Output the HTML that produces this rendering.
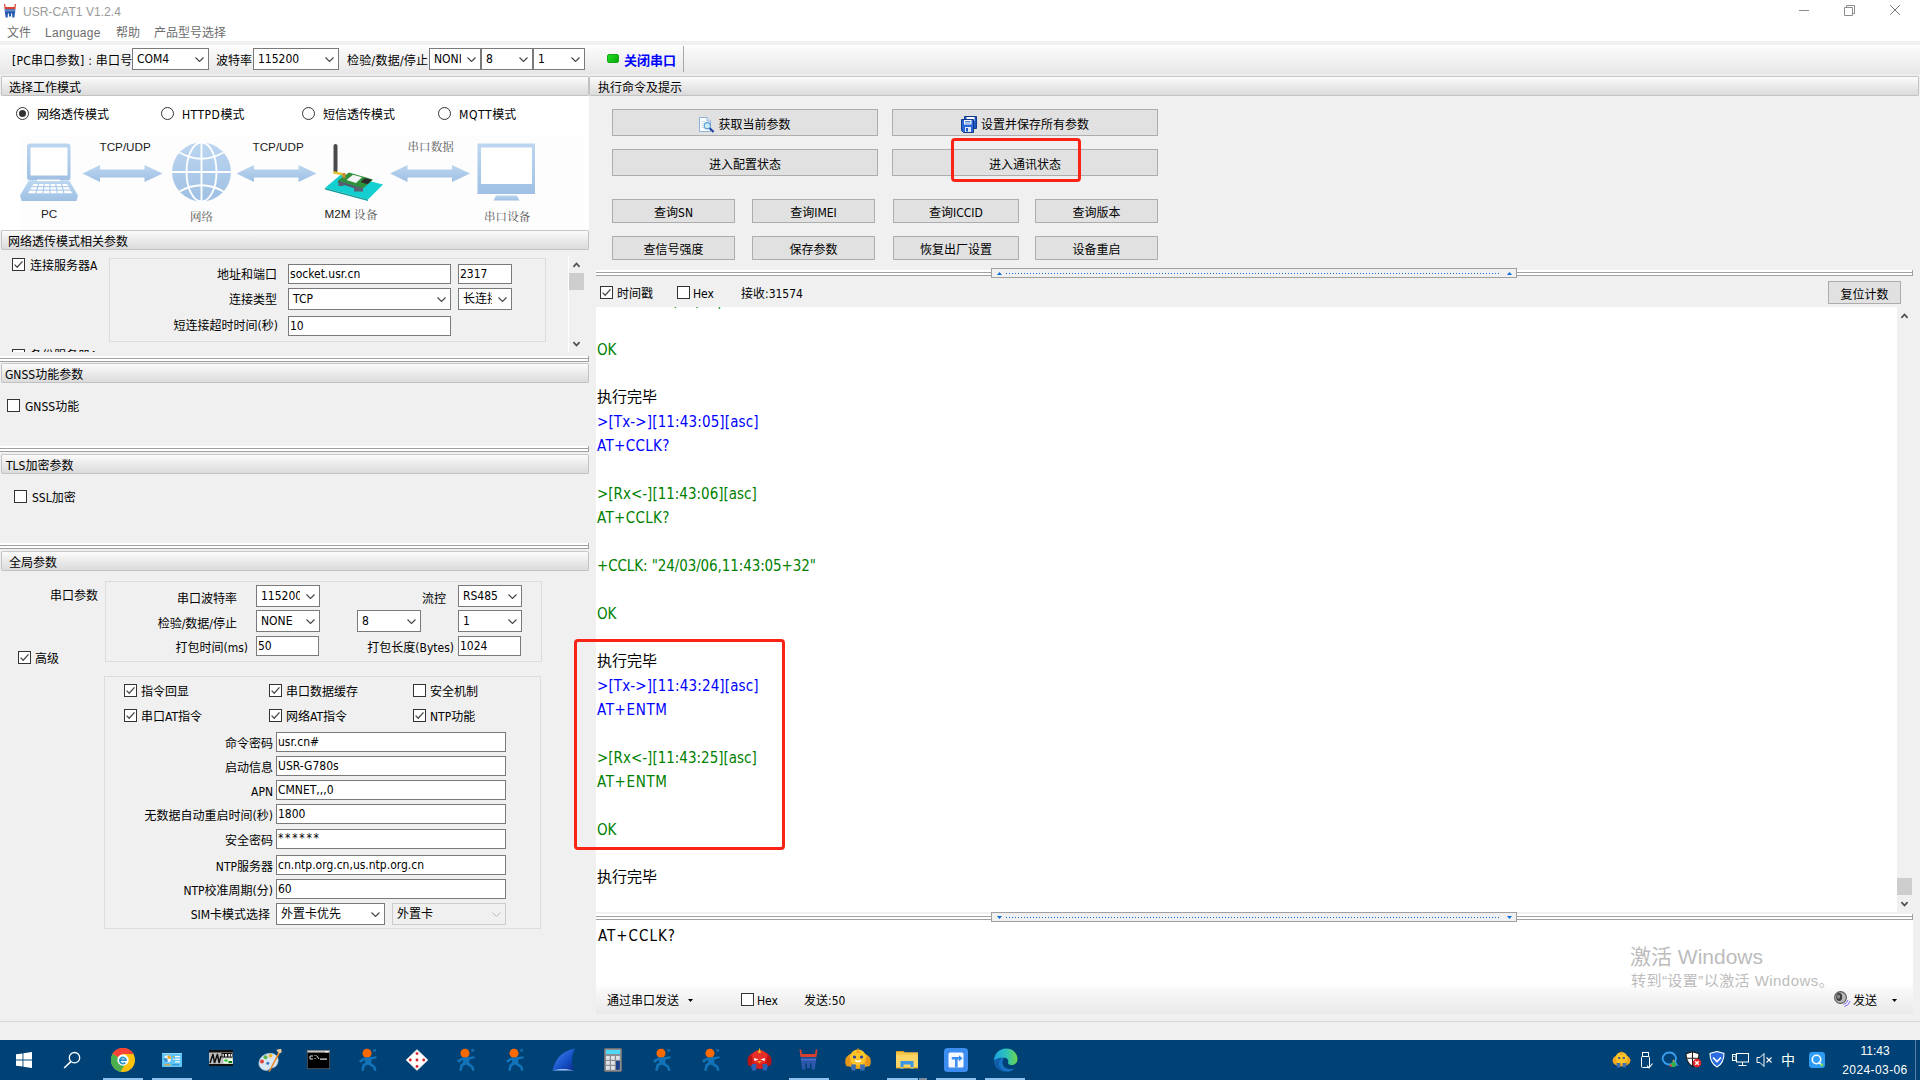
<!DOCTYPE html>
<html lang="zh-CN">
<head>
<meta charset="utf-8">
<title>USR-CAT1 V1.2.4</title>
<style>
*{box-sizing:border-box;margin:0;padding:0}
html,body{width:1920px;height:1080px;overflow:hidden;background:#f0f0f0}
body{position:relative;font-family:"DejaVu Sans Condensed","Liberation Sans","Noto Sans CJK SC",sans-serif;font-size:12px;color:#000;line-height:14px}
.a{position:absolute}
.t{position:absolute;white-space:nowrap;font-size:12px;line-height:16px;height:16px}
.r{text-align:right}
.hdr{position:absolute;height:20px;border:1px solid #c2c2c2;border-top-color:#c8c8c8;border-radius:2px;background:linear-gradient(#fbfbfb,#ececec 45%,#dbdbdb);font-size:12px;line-height:20px;white-space:nowrap;padding-top:1px}
.combo{position:absolute;background:#fff;border:1px solid #7a7a7a;font-size:12px;line-height:14px;white-space:nowrap;overflow:hidden}
.combo span{position:absolute;left:4px;top:3px}
.combo:after{content:"";position:absolute;right:0;top:0;width:19px;height:100%;background:inherit}
.combo svg{position:absolute;right:4px;top:8px;width:9px;height:5px;z-index:2}
.edit{position:absolute;background:#fff;border:1px solid #7a7a7a;font-size:12px;line-height:14px;white-space:nowrap;overflow:hidden;padding:2px 0 0 1px}
.btn{position:absolute;background:#e1e1e1;border:1px solid #adadad;font-size:12px;line-height:14px;white-space:nowrap;text-align:center;padding-top:1px}
.cb{position:absolute;width:13px;height:13px;background:#fff;border:1px solid #333}
.cb svg{position:absolute;left:0;top:0;width:11px;height:11px}
.rb{position:absolute;width:13px;height:13px;background:#fff;border:1px solid #333;border-radius:50%}
.rb.on:after{content:"";position:absolute;left:2px;top:2px;width:7px;height:7px;border-radius:50%;background:#333}
.gb{position:absolute;border:1px solid #dcdcdc}
.split{position:absolute;height:6px;border-right:1px solid #a0a0a0;background:linear-gradient(#fff 0,#fff 2px,#a0a0a0 2px,#a0a0a0 3px,#fff 3px,#fff 5px,#a0a0a0 5px,#a0a0a0 6px)}
.log{position:absolute;white-space:nowrap;font-size:15px;line-height:24px;height:24px;left:597px}
#titlebar,#menubar,#taskbar,.wm{font-family:"Liberation Sans","Noto Sans CJK SC",sans-serif}
.bl{color:#0000ff}.gr{color:#008000}
</style>
</head>
<body>
<!-- TITLE BAR -->
<div class="a" id="titlebar" style="left:0;top:0;width:1920px;height:22px;background:#fff">
<svg class="a" style="left:4px;top:4px" width="12" height="14" viewBox="0 0 13 14" preserveAspectRatio="none"><path d="M0 0 L1.2 0 L1.8 3 L11.2 3 L11.8 0 L13 0 L12.3 5.2 L0.7 5.2 Z" fill="#d9412e"/><path d="M0.6 5.2 L12.4 5.2 L12 8.5 L11.2 13.6 L9 13.6 L8.8 9.5 L7.6 9.5 L7.6 12.5 L5.4 12.5 L5.4 9.5 L4.2 9.5 L4 13.6 L1.8 13.6 L1 8.5 Z" fill="#2559b0"/><rect x="1" y="6.3" width="11" height="1" fill="#7fa0d8"/></svg>
<div class="t" style="left:23px;top:4px;color:#999;font-size:12px;letter-spacing:.05px">USR-CAT1 V1.2.4</div>
<svg class="a" style="left:1799px;top:5px" width="110" height="12" viewBox="0 0 110 12"><path d="M0 5.5 H10" stroke="#8c8c8c" stroke-width="1" fill="none"/><path d="M45.5 2.5 H53.5 V10.5 H45.5 Z M47.5 2.5 V0.5 H55.5 V8.5 H53.5" stroke="#8c8c8c" stroke-width="1" fill="none"/><path d="M91.2 0.2 L100.8 9.8 M100.8 0.2 L91.2 9.8" stroke="#777" stroke-width="1" fill="none"/></svg>
</div>
<!-- MENU BAR -->
<div class="a" id="menubar" style="left:0;top:22px;width:1920px;height:19px;background:#fff;color:#6d6d6d">
<div class="t" style="left:7px;top:3px">文件</div>
<div class="t" style="left:45px;top:3px;letter-spacing:.3px">Language</div>
<div class="t" style="left:116px;top:3px">帮助</div>
<div class="t" style="left:154px;top:3px">产品型号选择</div>
</div>
<!-- TOOLBAR -->
<div class="a" id="toolbar" style="left:0;top:41px;width:1920px;height:36px;background:linear-gradient(#f0f0f0 0,#f0f0f0 4px,#fdfdfd 4px,#f7f7f7 11px,#eeeeee 24px,#e6e6e6 33px,#ededed 33px,#ededed 36px)">
<div class="t" style="left:12px;top:12px;letter-spacing:.25px">[PC串口参数] : 串口号</div>
<div class="combo" style="left:132px;top:7px;width:77px;height:22px"><span>COM4</span><svg viewBox="0 0 9 5"><path d="M0.5 0.5 L4.5 4.5 L8.5 0.5" fill="none" stroke="#444" stroke-width="1.1"/></svg></div>
<div class="t" style="left:216px;top:12px">波特率</div>
<div class="combo" style="left:253px;top:7px;width:86px;height:22px"><span>115200</span><svg viewBox="0 0 9 5"><path d="M0.5 0.5 L4.5 4.5 L8.5 0.5" fill="none" stroke="#444" stroke-width="1.1"/></svg></div>
<div class="t" style="left:347px;top:12px;letter-spacing:.25px">检验/数据/停止</div>
<div class="combo" style="left:429px;top:7px;width:52px;height:22px"><span>NONI</span><svg viewBox="0 0 9 5"><path d="M0.5 0.5 L4.5 4.5 L8.5 0.5" fill="none" stroke="#444" stroke-width="1.1"/></svg></div><div class="combo" style="left:481px;top:7px;width:52px;height:22px"><span>8</span><svg viewBox="0 0 9 5"><path d="M0.5 0.5 L4.5 4.5 L8.5 0.5" fill="none" stroke="#444" stroke-width="1.1"/></svg></div><div class="combo" style="left:533px;top:7px;width:52px;height:22px"><span>1</span><svg viewBox="0 0 9 5"><path d="M0.5 0.5 L4.5 4.5 L8.5 0.5" fill="none" stroke="#444" stroke-width="1.1"/></svg></div>
<div class="a" style="left:607px;top:13px;width:12px;height:9px;border-radius:2px;background:linear-gradient(135deg,#1fe01f,#0aa50a);border:1px solid #16a516"></div>
<div class="t" style="left:624px;top:12px;color:#0000ff;font-weight:bold;font-size:13px">关闭串口</div>
<div class="a" style="left:683px;top:5px;width:1px;height:26px;background:#a8a8a8"></div>
</div>
<!-- LEFT PANEL -->
<div class="a" id="left" style="left:0;top:0;width:590px;height:1021px">
<div class="a" style="left:0;top:96px;width:589px;height:134px;background:#fff"></div>
<div class="hdr" style="left:1px;top:76px;width:588px;padding-left:7px">选择工作模式</div>
<div class="rb on" style="left:16px;top:107px"></div>
<div class="t" style="left:37px;top:107px">网络透传模式</div>
<div class="rb" style="left:161px;top:107px"></div>
<div class="t" style="left:182px;top:107px"><span style="letter-spacing:.5px">HTTPD</span>模式</div>
<div class="rb" style="left:302px;top:107px"></div>
<div class="t" style="left:323px;top:107px">短信透传模式</div>
<div class="rb" style="left:438px;top:107px"></div>
<div class="t" style="left:459px;top:107px"><span style="letter-spacing:.6px">MQTT</span>模式</div>
<!--DIAGRAM-->
<svg class="a" style="left:20px;top:136px" width="564" height="94" viewBox="20 136 564 94">
<defs>
<linearGradient id="lb" x1="0" y1="0" x2="0" y2="1"><stop offset="0" stop-color="#bcd6f0"/><stop offset="1" stop-color="#9fc0e4"/></linearGradient>
</defs>
<rect x="20" y="136" width="564" height="94" fill="#fdfdfd"/>
<!-- laptop -->
<rect x="27" y="143.5" width="43.5" height="37" rx="3" fill="url(#lb)"/>
<rect x="30.5" y="147.5" width="37" height="28" fill="#fff"/>
<path d="M28.5 181 L69.5 181 L78 195.5 L76.5 201 L21.5 201 L20 195.5 Z" fill="url(#lb)"/>
<rect x="37" y="179.6" width="23" height="1.6" fill="#fff"/>
<g fill="#fff"><path d="M33.5 184 L67 184 L68.2 186 L32.3 186 Z"/><path d="M31.5 187.2 L68.9 187.2 L70.2 189.6 L30.2 189.6 Z"/><path d="M29.4 190.8 L70.8 190.8 L72 193.2 L28.2 193.2 Z"/></g>
<g stroke="#a9c8e9" stroke-width="1.1"><path d="M38.6 183.5 L36 193.5 M44.3 183.5 L42.8 193.5 M50 183.5 L50 193.5 M55.7 183.5 L57.2 193.5 M61.4 183.5 L64 193.5"/></g>
<!-- arrows -->
<g fill="url(#lb)">
<path d="M82.5 173.5 L100 165 L100 169.5 L144.5 169.5 L144.5 165 L162.5 173.5 L144.5 182 L144.5 177.5 L100 177.5 L100 182 Z"/>
<path d="M236.5 173.5 L254 165 L254 169.5 L298.5 169.5 L298.5 165 L316.5 173.5 L298.5 182 L298.5 177.5 L254 177.5 L254 182 Z"/>
<path d="M390 173.5 L407.5 165 L407.5 169.5 L452 169.5 L452 165 L470 173.5 L452 182 L452 177.5 L407.5 177.5 L407.5 182 Z"/>
</g>
<!-- globe -->
<circle cx="201.5" cy="172" r="29.5" fill="url(#lb)"/>
<g fill="none" stroke="#fdfeff" stroke-width="1.9">
<path d="M172 172 H231 M201.5 142.5 V201.5"/>
<ellipse cx="201.5" cy="172" rx="15" ry="29.5"/>
<path d="M179.5 152.5 Q201.5 165 223.5 152.5 M179.5 191.5 Q201.5 179 223.5 191.5"/>
</g>
<!-- M2M device -->
<path d="M325 188 L341.5 174 L383 184.5 L368 199.5 Z" fill="#14cfcf"/>
<path d="M325 188 L368 199.5 L368 201 L325 189.5 Z" fill="#0e9e9e"/>
<path d="M338 180.5 L349 172.5 L373 179.5 L363 188.5 Z" fill="#2f8f3a"/>
<path d="M338 180.5 L363 188.5 L363 191 L338 183 Z" fill="#555a66"/>
<path d="M346.5 180 L353 174.7 L362 177.3 L356 183 Z" fill="#f4f4f4"/>
<path d="M360.5 182 L365 178 L372 180 L367.5 184.3 Z" fill="#2b2b2b"/>
<rect x="354" y="187.5" width="9" height="4" fill="#5b6070"/>
<rect x="338.5" y="183" width="5" height="3" fill="#5b6070"/>
<rect x="333.5" y="144" width="4" height="29" rx="2" fill="#4a4a4a"/>
<path d="M333 171 L345 173.5 L345 176 L333 173.5 Z" fill="#e2c437"/>
<rect x="342.5" y="173" width="3" height="5" fill="#c98a2c"/>
<!-- monitor -->
<rect x="477.5" y="143.5" width="57.5" height="50.5" fill="url(#lb)"/>
<rect x="481" y="147.5" width="51" height="36.5" fill="#fff"/>
<path d="M496 195.5 L517 195.5 L519.5 200.5 L493.5 200.5 Z" fill="url(#lb)"/>
<!-- labels -->
<g font-family="'Liberation Sans',sans-serif" font-size="11.7" fill="#1a1a1a">
<text x="99.5" y="151">TCP/UDP</text>
<text x="252.5" y="151">TCP/UDP</text>
<text x="41" y="218">PC</text>
<text x="324.5" y="218">M2M</text>
</g>
<g font-family="'Liberation Serif','Noto Serif CJK SC',serif" font-size="11.5" fill="#555">
<text x="190" y="220.5">网络</text>
<text x="407.5" y="151" letter-spacing="0.1">串口数据</text>
<text x="354" y="218.5" letter-spacing="0.6">设备</text>
<text x="484" y="221" letter-spacing="0.1">串口设备</text>
</g>
</svg>
<!--/DIAGRAM-->
<div class="hdr" style="left:1px;top:230px;width:588px;padding-left:6px">网络透传模式相关参数</div>
<div class="a" style="left:0;top:251px;width:589px;height:101px;overflow:hidden">
<div class="cb" style="left:12px;top:7px"><svg viewBox="0 0 11 11"><path d="M1.6 5.6 L4.2 8.3 L9.5 2.4" fill="none" stroke="#4a4a4a" stroke-width="1.35"/></svg></div>
<div class="t" style="left:30px;top:7px">连接服务器A</div>
<div class="gb" style="left:109px;top:7px;width:437px;height:84px"></div>
<div class="t r" style="left:77px;width:200px;top:16px">地址和端口</div>
<div class="edit" style="left:288px;top:13px;width:163px;height:20px">socket.usr.cn</div>
<div class="edit" style="left:458px;top:13px;width:54px;height:20px">2317</div>
<div class="t r" style="left:77px;width:200px;top:41px">连接类型</div>
<div class="combo" style="left:288px;top:37px;width:163px;height:22px"><span>TCP</span><svg viewBox="0 0 9 5"><path d="M0.5 0.5 L4.5 4.5 L8.5 0.5" fill="none" stroke="#444" stroke-width="1.1"/></svg></div>
<div class="combo" style="left:458px;top:37px;width:54px;height:22px"><span>长连接</span><svg viewBox="0 0 9 5"><path d="M0.5 0.5 L4.5 4.5 L8.5 0.5" fill="none" stroke="#444" stroke-width="1.1"/></svg></div>
<div class="t r" style="left:78px;width:200px;top:67px">短连接超时时间(秒)</div>
<div class="edit" style="left:288px;top:65px;width:163px;height:20px">10</div>
<div class="cb" style="left:12px;top:98px"></div>
<div class="t" style="left:30px;top:97px">备份服务器A</div>
<div class="a" style="left:568px;top:5px;width:18px;height:96px;background:#f0f0f0;border-left:1px solid #fff"></div>
<svg class="a" style="left:573px;top:11px" width="7" height="6" viewBox="0 0 7 6"><path d="M0.4 4.8 L3.5 1.5 L6.6 4.8" fill="none" stroke="#505050" stroke-width="1.8"/></svg>
<div class="a" style="left:569px;top:22px;width:15px;height:17px;background:#cdcdcd"></div>
<svg class="a" style="left:573px;top:90px" width="7" height="6" viewBox="0 0 7 6"><path d="M0.4 1.2 L3.5 4.5 L6.6 1.2" fill="none" stroke="#505050" stroke-width="1.8"/></svg>
</div>
<div class="split" style="left:0px;top:356px;width:589px"></div>
<div class="hdr" style="left:1px;top:363px;width:588px;padding-left:3px">GNSS功能参数</div>
<div class="cb" style="left:7px;top:399px"></div>
<div class="t" style="left:25px;top:399px">GNSS功能</div>
<div class="split" style="left:0px;top:446px;width:589px"></div>
<div class="hdr" style="left:1px;top:454px;width:588px;padding-left:4px">TLS加密参数</div>
<div class="cb" style="left:14px;top:490px"></div>
<div class="t" style="left:32px;top:490px">SSL加密</div>
<div class="split" style="left:0px;top:543px;width:589px"></div>
<div class="hdr" style="left:1px;top:551px;width:588px;padding-left:7px">全局参数</div>
<div class="t" style="left:50px;top:588px">串口参数</div>
<div class="gb" style="left:105px;top:581px;width:437px;height:81px"></div>
<div class="t r" style="left:37px;width:200px;top:591px">串口波特率</div>
<div class="combo" style="left:256px;top:585px;width:64px;height:22px"><span>115200</span><svg viewBox="0 0 9 5"><path d="M0.5 0.5 L4.5 4.5 L8.5 0.5" fill="none" stroke="#444" stroke-width="1.1"/></svg></div>
<div class="t r" style="left:246px;width:200px;top:591px">流控</div>
<div class="combo" style="left:458px;top:585px;width:64px;height:22px"><span>RS485</span><svg viewBox="0 0 9 5"><path d="M0.5 0.5 L4.5 4.5 L8.5 0.5" fill="none" stroke="#444" stroke-width="1.1"/></svg></div>
<div class="t r" style="left:37px;width:200px;top:616px">检验/数据/停止</div>
<div class="combo" style="left:256px;top:610px;width:64px;height:22px"><span>NONE</span><svg viewBox="0 0 9 5"><path d="M0.5 0.5 L4.5 4.5 L8.5 0.5" fill="none" stroke="#444" stroke-width="1.1"/></svg></div>
<div class="combo" style="left:357px;top:610px;width:64px;height:22px"><span>8</span><svg viewBox="0 0 9 5"><path d="M0.5 0.5 L4.5 4.5 L8.5 0.5" fill="none" stroke="#444" stroke-width="1.1"/></svg></div>
<div class="combo" style="left:458px;top:610px;width:64px;height:22px"><span>1</span><svg viewBox="0 0 9 5"><path d="M0.5 0.5 L4.5 4.5 L8.5 0.5" fill="none" stroke="#444" stroke-width="1.1"/></svg></div>
<div class="t r" style="left:48px;width:200px;top:640px">打包时间(ms)</div>
<div class="edit" style="left:256px;top:636px;width:63px;height:20px">50</div>
<div class="t r" style="left:254px;width:200px;top:640px">打包长度(Bytes)</div>
<div class="edit" style="left:458px;top:636px;width:63px;height:20px">1024</div>
<div class="cb" style="left:18px;top:651px"><svg viewBox="0 0 11 11"><path d="M1.6 5.6 L4.2 8.3 L9.5 2.4" fill="none" stroke="#4a4a4a" stroke-width="1.35"/></svg></div>
<div class="t" style="left:35px;top:651px">高级</div>
<div class="gb" style="left:104px;top:676px;width:437px;height:253px"></div>
<div class="cb" style="left:124px;top:684px"><svg viewBox="0 0 11 11"><path d="M1.6 5.6 L4.2 8.3 L9.5 2.4" fill="none" stroke="#4a4a4a" stroke-width="1.35"/></svg></div>
<div class="t" style="left:141px;top:684px">指令回显</div>
<div class="cb" style="left:269px;top:684px"><svg viewBox="0 0 11 11"><path d="M1.6 5.6 L4.2 8.3 L9.5 2.4" fill="none" stroke="#4a4a4a" stroke-width="1.35"/></svg></div>
<div class="t" style="left:286px;top:684px">串口数据缓存</div>
<div class="cb" style="left:413px;top:684px"></div>
<div class="t" style="left:430px;top:684px">安全机制</div>
<div class="cb" style="left:124px;top:709px"><svg viewBox="0 0 11 11"><path d="M1.6 5.6 L4.2 8.3 L9.5 2.4" fill="none" stroke="#4a4a4a" stroke-width="1.35"/></svg></div>
<div class="t" style="left:141px;top:709px">串口AT指令</div>
<div class="cb" style="left:269px;top:709px"><svg viewBox="0 0 11 11"><path d="M1.6 5.6 L4.2 8.3 L9.5 2.4" fill="none" stroke="#4a4a4a" stroke-width="1.35"/></svg></div>
<div class="t" style="left:286px;top:709px">网络AT指令</div>
<div class="cb" style="left:413px;top:709px"><svg viewBox="0 0 11 11"><path d="M1.6 5.6 L4.2 8.3 L9.5 2.4" fill="none" stroke="#4a4a4a" stroke-width="1.35"/></svg></div>
<div class="t" style="left:430px;top:709px">NTP功能</div>
<div class="t r" style="left:73px;width:200px;top:736px">命令密码</div>
<div class="edit" style="left:276px;top:732px;width:230px;height:20px">usr.cn#</div>
<div class="t r" style="left:73px;width:200px;top:760px">启动信息</div>
<div class="edit" style="left:276px;top:756px;width:230px;height:20px">USR-G780s</div>
<div class="t r" style="left:73px;width:200px;top:784px">APN</div>
<div class="edit" style="left:276px;top:780px;width:230px;height:20px">CMNET,,,0</div>
<div class="t r" style="left:73px;width:200px;top:808px">无数据自动重启时间(秒)</div>
<div class="edit" style="left:276px;top:804px;width:230px;height:20px">1800</div>
<div class="t r" style="left:73px;width:200px;top:833px">安全密码</div>
<div class="edit" style="left:276px;top:829px;width:230px;height:20px"><span style="letter-spacing:1.7px;position:relative;top:-1px">******</span></div>
<div class="t r" style="left:73px;width:200px;top:859px">NTP服务器</div>
<div class="edit" style="left:276px;top:855px;width:230px;height:20px">cn.ntp.org.cn,us.ntp.org.cn</div>
<div class="t r" style="left:73px;width:200px;top:883px">NTP校准周期(分)</div>
<div class="edit" style="left:276px;top:879px;width:230px;height:20px">60</div>
<div class="t r" style="left:70px;width:200px;top:907px">SIM卡模式选择</div>
<div class="combo" style="left:276px;top:903px;width:109px;height:22px"><span>外置卡优先</span><svg viewBox="0 0 9 5"><path d="M0.5 0.5 L4.5 4.5 L8.5 0.5" fill="none" stroke="#444" stroke-width="1.1"/></svg></div>
<div class="combo" style="left:392px;top:903px;width:114px;height:22px;border-color:#ccc;background:#f0f0f0"><span>外置卡</span><svg viewBox="0 0 9 5"><path d="M0.5 0.5 L4.5 4.5 L8.5 0.5" fill="none" stroke="#bbb" stroke-width="1"/></svg></div>
</div>
<!-- RIGHT PANEL -->
<div class="a" id="right" style="left:0;top:0;width:1920px;height:1021px">
<div class="hdr" style="left:589px;top:76px;width:1330px;padding-left:8px">执行命令及提示</div>
<div class="btn" style="left:612px;top:109px;width:266px;height:27px;line-height:27px;padding-top:2px"><svg style="display:inline-block;vertical-align:-4px;margin-right:3px" width="16" height="16" viewBox="0 0 16 16"><path d="M0.5 0.5 H8 L11.5 4 V14.5 H0.5 Z" fill="#fdfeff" stroke="#8fb0d8"/><path d="M8 0.5 V4 H11.5" fill="#e3edf8" stroke="#8fb0d8"/><path d="M2.5 4.5 H6.5 M2.5 6.5 H5 M2.5 8.5 H4.5 M2.5 10.5 H5" stroke="#c3d3e6" stroke-width=".8"/><circle cx="8.3" cy="8.7" r="3.1" fill="#c8ecf6" stroke="#5f9fd6" stroke-width="1.2"/><path d="M10.7 11.2 L14.6 15" stroke="#1c3fa8" stroke-width="2.1"/></svg>获取当前参数</div>
<div class="btn" style="left:892px;top:109px;width:266px;height:27px;line-height:27px;padding-top:2px"><svg style="display:inline-block;vertical-align:-4px;margin-right:3px" width="17" height="17" viewBox="0 0 17 17"><path d="M3.5 0.5 H15.5 V12.5 H3.5 Z" fill="#1f57c3" stroke="#123a8c"/><rect x="5.5" y="1" width="8" height="4" fill="#fff"/><path d="M0.5 3.5 H12.5 V16.5 H2.5 L0.5 14.5 Z" fill="#2a66d6" stroke="#123a8c"/><rect x="3" y="4" width="7.5" height="4.5" fill="#fff"/><path d="M4 5.5 H9.5 M4 7 H9.5" stroke="#2a66d6" stroke-width=".8"/><rect x="4" y="11" width="6" height="5" fill="#dfe6f5"/><rect x="5" y="12" width="2" height="3.5" fill="#1f57c3"/></svg>设置并保存所有参数</div>
<div class="btn" style="left:612px;top:149px;width:266px;height:27px;line-height:27px;padding-top:2px">进入配置状态</div>
<div class="btn" style="left:892px;top:149px;width:266px;height:27px;line-height:27px;padding-top:2px">进入通讯状态</div>
<div class="btn" style="left:612px;top:199px;width:123px;height:24px;line-height:24px;padding-top:1px">查询SN</div>
<div class="btn" style="left:752px;top:199px;width:123px;height:24px;line-height:24px;padding-top:1px">查询IMEI</div>
<div class="btn" style="left:893px;top:199px;width:126px;height:24px;line-height:24px;padding-top:1px">查询ICCID</div>
<div class="btn" style="left:1035px;top:199px;width:123px;height:24px;line-height:24px;padding-top:1px">查询版本</div>
<div class="btn" style="left:612px;top:236px;width:123px;height:24px;line-height:24px;padding-top:1px">查信号强度</div>
<div class="btn" style="left:752px;top:236px;width:123px;height:24px;line-height:24px;padding-top:1px">保存参数</div>
<div class="btn" style="left:893px;top:236px;width:126px;height:24px;line-height:24px;padding-top:1px">恢复出厂设置</div>
<div class="btn" style="left:1035px;top:236px;width:123px;height:24px;line-height:24px;padding-top:1px">设备重启</div>
<div class="a" style="left:951px;top:138px;width:130px;height:44px;border:3px solid #fb2216;border-radius:4px"></div>
<div class="split" style="left:596px;top:270px;width:1317px"></div>
<div class="a" style="left:991px;top:268px;width:526px;height:10px;background:#f0f0f0;border:1px solid #a0a0a0;z-index:3"><div class="a" style="left:14px;top:4px;width:493px;height:1px;background:repeating-linear-gradient(90deg,#0a6cd6 0 1px,transparent 1px 3px)"></div><svg class="a" style="left:5px;top:3px" width="5" height="3" viewBox="0 0 5 3"><path d="M0 3 L2.5 0 L5 3 Z" fill="#0a6cd6"/></svg><svg class="a" style="left:515px;top:3px" width="5" height="3" viewBox="0 0 5 3"><path d="M0 3 L2.5 0 L5 3 Z" fill="#0a6cd6"/></svg></div>
<div class="cb" style="left:600px;top:286px"><svg viewBox="0 0 11 11"><path d="M1.6 5.6 L4.2 8.3 L9.5 2.4" fill="none" stroke="#4a4a4a" stroke-width="1.35"/></svg></div>
<div class="t" style="left:617px;top:286px">时间戳</div>
<div class="cb" style="left:677px;top:286px"></div>
<div class="t" style="left:693px;top:286px">Hex</div>
<div class="t" style="left:741px;top:286px">接收:31574</div>
<div class="btn" style="left:1828px;top:281px;width:73px;height:23px;line-height:23px;padding-top:2px">复位计数</div>
<div class="a" style="left:596px;top:307px;width:1301px;height:605px;background:#fff"></div>
<div class="a" style="left:1897px;top:307px;width:17px;height:605px;background:#f0f0f0"></div>
<svg class="a" style="left:1901px;top:313px" width="7" height="6" viewBox="0 0 7 6"><path d="M0.4 4.8 L3.5 1.5 L6.6 4.8" fill="none" stroke="#505050" stroke-width="1.8"/></svg>
<div class="a" style="left:1897px;top:878px;width:15px;height:17px;background:#cdcdcd"></div>
<svg class="a" style="left:1901px;top:901px" width="7" height="6" viewBox="0 0 7 6"><path d="M0.4 1.2 L3.5 4.5 L6.6 1.2" fill="none" stroke="#505050" stroke-width="1.8"/></svg>
<div class="a" style="left:596px;top:307px;width:1301px;height:604px;overflow:hidden">
<div class="log gr" style="left:1px;top:-17px;letter-spacing:-.1px">+CCLK: "24/03/06,11:42:47+32"</div>
<div class="log gr" style="left:1px;top:31px">OK</div>
<div class="log " style="left:1px;top:78px">执行完毕</div>
<div class="log bl" style="left:1px;top:103px;letter-spacing:.14px">&gt;[Tx-&gt;][11:43:05][asc]</div>
<div class="log bl" style="left:1px;top:127px;letter-spacing:.35px">AT+CCLK?</div>
<div class="log gr" style="left:1px;top:175px">&gt;[Rx&lt;-][11:43:06][asc]</div>
<div class="log gr" style="left:1px;top:199px;letter-spacing:.35px">AT+CCLK?</div>
<div class="log gr" style="left:1px;top:247px;letter-spacing:-.1px">+CCLK: "24/03/06,11:43:05+32"</div>
<div class="log gr" style="left:1px;top:295px">OK</div>
<div class="log " style="left:1px;top:342px">执行完毕</div>
<div class="log bl" style="left:1px;top:367px;letter-spacing:.14px">&gt;[Tx-&gt;][11:43:24][asc]</div>
<div class="log bl" style="left:1px;top:391px;letter-spacing:.65px">AT+ENTM</div>
<div class="log gr" style="left:1px;top:439px">&gt;[Rx&lt;-][11:43:25][asc]</div>
<div class="log gr" style="left:1px;top:463px;letter-spacing:.65px">AT+ENTM</div>
<div class="log gr" style="left:1px;top:511px">OK</div>
<div class="log " style="left:1px;top:558px">执行完毕</div>
</div>
<div class="a" style="left:574px;top:639px;width:211px;height:211px;border:3px solid #fb2216;border-radius:4px"></div>
<div class="split" style="left:596px;top:914px;width:1317px"></div>
<div class="a" style="left:991px;top:912px;width:526px;height:10px;background:#f0f0f0;border:1px solid #a0a0a0;z-index:3"><div class="a" style="left:14px;top:4px;width:493px;height:1px;background:repeating-linear-gradient(90deg,#0a6cd6 0 1px,transparent 1px 3px)"></div><svg class="a" style="left:5px;top:3px" width="5" height="3" viewBox="0 0 5 3"><path d="M0 0 L5 0 L2.5 3 Z" fill="#0a6cd6"/></svg><svg class="a" style="left:515px;top:3px" width="5" height="3" viewBox="0 0 5 3"><path d="M0 0 L5 0 L2.5 3 Z" fill="#0a6cd6"/></svg></div>
<div class="a" style="left:596px;top:920px;width:1317px;height:94px;background:linear-gradient(#fff 0,#fff 64px,#f7f7f7 72px,#e9e9e9 100%)"></div>
<div class="log" style="left:598px;top:924px;letter-spacing:1px">AT+CCLK?</div>
<div class="t" style="left:607px;top:993px">通过串口发送</div>
<svg class="a" style="left:688px;top:999px" width="5" height="3" viewBox="0 0 5 3"><path d="M0 0 H5 L2.5 3 Z" fill="#000"/></svg>
<div class="cb" style="left:741px;top:993px"></div>
<div class="t" style="left:757px;top:993px">Hex</div>
<div class="t" style="left:804px;top:993px">发送:50</div>
<svg class="a" style="left:1833px;top:990px" width="18" height="18" viewBox="0 0 18 18"><circle cx="7.5" cy="7.5" r="6.5" fill="#5a5a5a"/><circle cx="7.5" cy="7.5" r="5.3" fill="#b9b9b9"/><ellipse cx="6.2" cy="7" rx="3" ry="4" fill="#3c3c3c"/><ellipse cx="5.6" cy="6.6" rx="1.5" ry="2.2" fill="#8c8c8c"/><path d="M10.5 14.5 Q14 13.5 15 10 M11.5 16.5 Q16 15.5 17 11" fill="none" stroke="#7b6cf0" stroke-width="1"/></svg>
<div class="t" style="left:1853px;top:993px">发送</div>
<svg class="a" style="left:1892px;top:999px" width="5" height="3" viewBox="0 0 5 3"><path d="M0 0 H5 L2.5 3 Z" fill="#000"/></svg>
<div class="a wm" style="left:1630px;top:943px;font-size:21px;line-height:28px;color:#bcbcbc;white-space:nowrap;">激活 Windows</div>
<div class="a wm" style="left:1631px;top:971px;font-size:15px;line-height:20px;color:#bcbcbc;white-space:nowrap;letter-spacing:.45px;">转到“设置”以激活 Windows。</div>
</div>
<!-- STATUS BAR -->
<div class="a" id="status" style="left:0;top:1021px;width:1920px;height:19px;border-top:1px solid #d7d7d7;background:#f0f0f0"></div>
<!-- TASKBAR -->
<div class="a" id="taskbar" style="left:0;top:1040px;width:1920px;height:40px;background:#004275">
<svg class="a" style="left:16px;top:12px" width="16" height="16" viewBox="0 0 16 16"><path d="M0 2.3 L6.5 1.4 V7.6 H0 Z M7.4 1.3 L16 0 V7.6 H7.4 Z M0 8.4 H6.5 V14.6 L0 13.7 Z M7.4 8.4 H16 V16 L7.4 14.7 Z" fill="#fff"/></svg>
<svg class="a" style="left:63px;top:11px" width="18" height="18" viewBox="0 0 18 18"><circle cx="11.5" cy="6.7" r="5.2" fill="none" stroke="#fff" stroke-width="1.3"/><path d="M7.8 10.6 L1.2 17" stroke="#fff" stroke-width="1.6"/></svg>
<svg class="a" style="left:111px;top:8px" width="24" height="24" viewBox="0 0 24 24"><circle cx="12" cy="12" r="12" fill="#fcc10d"/><path d="M12 12 L1.6 6 A12 12 0 0 1 22.4 6 L12 6 Z" fill="#fa4334"/><path d="M1.6 6 A12 12 0 0 1 22.4 6 L12 6 Z" fill="#fa4334"/><path d="M1.6 6 A12 12 0 0 0 9.5 23.7 L14.8 14.8 L12 12 Z" fill="#4aad4e"/><path d="M1.6 6 L7 15 L9.5 23.7 A12 12 0 0 1 1.6 6 Z" fill="#4aad4e"/><circle cx="12" cy="12" r="5.7" fill="#fff"/><path d="M8.9 12.2 H15 A3.1 3.1 0 1 0 14.2 14.6" fill="none" stroke="#2490c8" stroke-width="1.7"/></svg>
<svg class="a" style="left:162px;top:13px" width="20" height="14" viewBox="0 0 20 14"><rect width="20" height="14" fill="#5fc4f3"/><rect x="0" y="0" width="20" height="1" fill="#8fd6f7"/><circle cx="5.5" cy="5.8" r="3.6" fill="#e9f6fd"/><path d="M5.5 5.8 V2.2 A3.6 3.6 0 0 1 9.1 5.8 Z" fill="#f5a623"/><path d="M5.5 5.8 L5.5 9.4 A3.6 3.6 0 0 1 2 4.8 Z" fill="#2d8fd0"/><rect x="13" y="3" width="5" height="1.2" fill="#fff"/><rect x="13" y="5.6" width="5" height="1.2" fill="#fff"/><rect x="13" y="8.2" width="5" height="1.2" fill="#fff"/><rect x="11" y="3" width="1.2" height="1.2" fill="#f5a623"/><rect x="11" y="5.6" width="1.2" height="1.2" fill="#fff"/><rect x="2.5" y="11.2" width="6" height="1.2" fill="#f5a623"/><rect x="10" y="11.2" width="7" height="1.2" fill="#2d8fd0"/></svg>
<svg class="a" style="left:209px;top:10px" width="24" height="16" viewBox="0 0 24 16"><rect width="24" height="16" fill="#111"/><rect x="0" y="2.5" width="24" height="11.5" fill="#bdbdbd"/><path d="M1 13 L4 4 L5.5 13 L8.5 4 L10 13 L12 6" fill="none" stroke="#111" stroke-width="1.5"/><rect x="12.5" y="3" width="11" height="4.5" fill="#111"/><rect x="13.5" y="4" width="1.3" height="2.5" fill="#eee"/><rect x="16" y="4" width="2" height="2.5" fill="#eee"/><rect x="19.3" y="4" width="2" height="2.5" fill="#eee"/><rect x="22" y="4" width="1" height="2.5" fill="#eee"/><rect x="14.5" y="8.5" width="9" height="5" fill="#e8ffe8"/><rect x="15.5" y="9.5" width="3" height="2" fill="#1fb81f"/><rect x="19.5" y="11" width="3.5" height="2" fill="#0b7a0b"/></svg>
<svg class="a" style="left:257px;top:8px" width="26" height="25" viewBox="0 0 26 25"><path d="M2 17 C1 9 9 4.5 15 5.5 C21 6.5 22.5 12 20 16.5 C17.5 21 14 19 12.5 21 C11 23.5 4 23 2 17 Z" fill="#d9e6f4" stroke="#a9bdd3" stroke-width=".8"/><circle cx="5" cy="13.5" r="2" fill="#e0453a"/><circle cx="8.5" cy="9.2" r="2" fill="#5fb648"/><circle cx="13.5" cy="7.8" r="2" fill="#f0b73a"/><circle cx="10.8" cy="15.3" r="1.5" fill="#3c79c9"/><path d="M21.2 4.5 L22.8 5.4 L13 23.6 L11.8 24 L11.9 22.8 Z" fill="#e98a2b"/><path d="M19.3 1.8 L24 0.8 L24.8 4 L22.9 5.6 L21 4.6 Z" fill="#e8c79a"/></svg>
<svg class="a" style="left:307px;top:10px" width="23" height="19" viewBox="0 0 23 19"><rect x="0" y="0.5" width="23" height="18.5" fill="#000" stroke="#8a8a8a" stroke-width="1"/><rect x="0.5" y="1" width="22" height="1.6" fill="#c9c9c9"/><rect x="18" y="1.2" width="3.5" height="1.1" fill="#fff"/><path d="M3 6 H6 M3 6 V9 H6 M7.5 5.5 H8.5 M7.5 8.5 H8.5 M9.5 5.5 L12 9" stroke="#ddd" stroke-width="1" fill="none"/><rect x="13" y="8.5" width="7" height="1.2" fill="#eee"/></svg>
<svg class="a" style="left:358px;top:8px" width="22" height="24" viewBox="0 0 22 24"><circle cx="9" cy="5.3" r="4.5" fill="#ff6a00"/><circle cx="16.7" cy="2.3" r="1.6" fill="#1667a8"/><path d="M9 9.5 L18.5 8.2 L18.7 10.2 L13.5 11.5 L13.2 15 L17.2 18 L18.6 22.5 L16.3 23 L15 19.5 L10 16.5 L7 18 L5.5 23 L3.2 22.5 L4.5 16.5 L7.2 14.5 L6.8 11.8 L3 14.8 L1.2 13.3 L1.8 12 L6.5 9.5 Z" fill="#1273b8"/></svg>
<svg class="a" style="left:405px;top:9px" width="24" height="22" viewBox="0 0 24 22"><path d="M12 0.5 L23 11 L12 21.5 L1 11 Z" fill="#fdfdfd" stroke="#d5d5d5" stroke-width=".6"/><g fill="#d8202a"><circle cx="12" cy="4.6" r="1.4"/><circle cx="5.3" cy="11" r="1.4"/><circle cx="12" cy="11" r="1.4"/><circle cx="18.7" cy="11" r="1.4"/><circle cx="12" cy="17.4" r="1.4"/></g></svg>
<svg class="a" style="left:456px;top:8px" width="22" height="24" viewBox="0 0 22 24"><circle cx="9" cy="5.3" r="4.5" fill="#ff6a00"/><circle cx="16.7" cy="2.3" r="1.6" fill="#1667a8"/><path d="M9 9.5 L18.5 8.2 L18.7 10.2 L13.5 11.5 L13.2 15 L17.2 18 L18.6 22.5 L16.3 23 L15 19.5 L10 16.5 L7 18 L5.5 23 L3.2 22.5 L4.5 16.5 L7.2 14.5 L6.8 11.8 L3 14.8 L1.2 13.3 L1.8 12 L6.5 9.5 Z" fill="#1273b8"/></svg>
<svg class="a" style="left:505px;top:8px" width="22" height="24" viewBox="0 0 22 24"><circle cx="9" cy="5.3" r="4.5" fill="#ff6a00"/><circle cx="16.7" cy="2.3" r="1.6" fill="#1667a8"/><path d="M9 9.5 L18.5 8.2 L18.7 10.2 L13.5 11.5 L13.2 15 L17.2 18 L18.6 22.5 L16.3 23 L15 19.5 L10 16.5 L7 18 L5.5 23 L3.2 22.5 L4.5 16.5 L7.2 14.5 L6.8 11.8 L3 14.8 L1.2 13.3 L1.8 12 L6.5 9.5 Z" fill="#1273b8"/></svg>
<svg class="a" style="left:552px;top:8px" width="24" height="23" viewBox="0 0 24 23"><defs><linearGradient id="sf" x1="0" y1="0" x2="1" y2="1"><stop offset="0" stop-color="#4a8df0"/><stop offset=".6" stop-color="#1650c8"/><stop offset="1" stop-color="#0b2a8a"/></linearGradient></defs><path d="M0.5 22.5 C3 12 9 3 23 0.5 C19.5 7 19 14 22 22.5 Z" fill="url(#sf)"/><path d="M0.5 22.5 C6 20.5 15 20.2 22 22.5 Z" fill="#9dc0f2"/></svg>
<svg class="a" style="left:604px;top:8px" width="18" height="24" viewBox="0 0 18 24"><rect x="0.5" y="0.5" width="17" height="23" rx="1" fill="#8a8d92" stroke="#6c6f74"/><rect x="2" y="2" width="14" height="4" fill="#4fd8f5"/><g fill="#dfe3e8"><rect x="2" y="8" width="3.8" height="3.8"/><rect x="7" y="8" width="3.8" height="3.8"/><rect x="12" y="8" width="3.8" height="3.8"/><rect x="2" y="13" width="3.8" height="3.8"/><rect x="7" y="13" width="3.8" height="3.8"/><rect x="2" y="18" width="3.8" height="3.8"/><rect x="7" y="18" width="3.8" height="3.8"/></g><rect x="12" y="13" width="3.8" height="8.8" fill="#1b3f8a"/></svg>
<svg class="a" style="left:652px;top:8px" width="22" height="24" viewBox="0 0 22 24"><circle cx="9" cy="5.3" r="4.5" fill="#ff6a00"/><circle cx="16.7" cy="2.3" r="1.6" fill="#1667a8"/><path d="M9 9.5 L18.5 8.2 L18.7 10.2 L13.5 11.5 L13.2 15 L17.2 18 L18.6 22.5 L16.3 23 L15 19.5 L10 16.5 L7 18 L5.5 23 L3.2 22.5 L4.5 16.5 L7.2 14.5 L6.8 11.8 L3 14.8 L1.2 13.3 L1.8 12 L6.5 9.5 Z" fill="#1273b8"/></svg>
<svg class="a" style="left:701px;top:8px" width="22" height="24" viewBox="0 0 22 24"><circle cx="9" cy="5.3" r="4.5" fill="#ff6a00"/><circle cx="16.7" cy="2.3" r="1.6" fill="#1667a8"/><path d="M9 9.5 L18.5 8.2 L18.7 10.2 L13.5 11.5 L13.2 15 L17.2 18 L18.6 22.5 L16.3 23 L15 19.5 L10 16.5 L7 18 L5.5 23 L3.2 22.5 L4.5 16.5 L7.2 14.5 L6.8 11.8 L3 14.8 L1.2 13.3 L1.8 12 L6.5 9.5 Z" fill="#1273b8"/></svg>
<svg class="a" style="left:747px;top:7px" width="25" height="24" viewBox="0 0 25 24"><ellipse cx="12.5" cy="13" rx="11.5" ry="9" fill="#d81e1e"/><ellipse cx="12.5" cy="10" rx="7.5" ry="7" fill="#e8302a"/><path d="M12.5 0.5 L14 6 L11 6 Z" fill="#f5b41e"/><path d="M7 11 L11.5 12.5 L7.5 14 Z M18 11 L13.5 12.5 L17.5 14 Z" fill="#fff"/><path d="M10.5 14 L14.5 14 L12.5 16.5 Z" fill="#f2a21c"/><path d="M4 17 L9.5 17 L9 23.5 L5 23.5 Z M15.5 17 L21 17 L20 23.5 L16 23.5 Z" fill="#2a62b6"/><ellipse cx="3" cy="14" rx="2.5" ry="5" fill="#b81414"/><ellipse cx="22" cy="14" rx="2.5" ry="5" fill="#b81414"/></svg>
<svg class="a" style="left:799px;top:9px" width="19" height="21" viewBox="0 0 19 21"><path d="M0.5 0.5 L2.3 0.5 L3 5 L16 5 L16.7 0.5 L18.5 0.5 L17.5 8 L1.5 8 Z" fill="#d9412e"/><path d="M1.5 8.5 L17.5 8.5 L16.8 13 L15.8 20.5 L12.8 20.5 L12.5 14.5 L11 14.5 L11 19 L8 19 L8 14.5 L6.5 14.5 L6.2 20.5 L3.2 20.5 L2.2 13 Z" fill="#2c57ad"/><rect x="2" y="10" width="15" height="1.3" fill="#4a73c4"/></svg>
<svg class="a" style="left:845px;top:7px" width="26" height="24" viewBox="0 0 26 24"><ellipse cx="13" cy="13.5" rx="12" ry="8.5" fill="#f0a81a"/><ellipse cx="13" cy="10.5" rx="8" ry="8" fill="#fbc52a"/><path d="M13 0.5 L14.8 6 L11.2 6 Z" fill="#f59a1e"/><circle cx="9.5" cy="10" r="1.6" fill="#2a3fa0"/><circle cx="16.5" cy="10" r="1.6" fill="#2a3fa0"/><path d="M10 13.5 Q13 16 16 13.5" stroke="#fff" stroke-width="1.2" fill="#fff"/><path d="M6 17.5 L11 17.5 L10.5 23.5 L6.5 23.5 Z M15 17.5 L20 17.5 L19.5 23.5 L15.5 23.5 Z" fill="#3f6db2"/><ellipse cx="2.8" cy="14.5" rx="2.5" ry="5" fill="#e8961a"/><ellipse cx="23.2" cy="14.5" rx="2.5" ry="5" fill="#e8961a"/></svg>
<svg class="a" style="left:896px;top:11px" width="22" height="18" viewBox="0 0 22 18"><path d="M0 1 Q0 0 1 0 H7.5 L9 2 H0 Z" fill="#e6a21c"/><rect x="0" y="1.6" width="22" height="15.5" rx=".8" fill="#fbd566"/><rect x="0" y="1.6" width="22" height="2" fill="#f6c343"/><path d="M4.5 10 H17.5 V18 H14.5 V13.5 H7.5 V18 H4.5 Z" fill="#3c96e6"/><rect x="0" y="16" width="22" height="1.4" fill="#e9b93a"/></svg>
<svg class="a" style="left:944px;top:8px" width="24" height="24" viewBox="0 0 24 24"><rect width="24" height="24" rx="3.5" fill="#3d8cf0"/><rect x="4.5" y="4.5" width="15" height="15" rx="1.5" fill="#f4f8ff"/><path d="M11 9 L15 9 L15 7.2 L18.6 10.3 L15 13.4 L15 11.6 L13.6 11.6 L13.6 19.5 L11 19.5 L11 11.6 L7.8 11.6 L7.8 9 Z" fill="#3d8cf0"/></svg>
<svg class="a" style="left:993px;top:8px" width="25" height="24" viewBox="0 0 25 24"><defs><linearGradient id="eg" x1="0" y1="0" x2="1" y2="0"><stop offset="0" stop-color="#1da1e6"/><stop offset=".55" stop-color="#2ec4b6"/><stop offset="1" stop-color="#6fd64a"/></linearGradient></defs><path d="M1 13 C1 5.5 6.5 0.5 13 0.5 C20 0.5 24.5 5.5 24.5 11 C24.5 15 21.5 17 18.5 17 C16 17 14.8 16 15.2 14.5 C15.8 12.5 14.5 9.8 11 9.8 C6 9.8 1 13 1 13 Z" fill="url(#eg)"/><path d="M1 12.5 C1 19.5 6.5 23.8 12.5 23.8 C16 23.8 19 22.5 21 20.5 C18.5 21.5 14 21.5 11 18.5 C8 15.5 8.8 11.8 11 9.8 C5 9.5 1.3 12 1 12.5 Z" fill="#0f5da8"/><path d="M6 17 C7 21.5 11.5 24 16 23.4 C18.5 23 20.3 21.5 21 20.5 C17 22 12.5 21.2 10.5 18 C9 15.5 9.3 12.5 11 9.8 C8 10.5 5.2 13 6 17 Z" fill="#1672c4"/></svg>
<div class="a" style="left:103px;top:38px;width:40px;height:2px;background:#8ec3f0"></div>
<div class="a" style="left:152px;top:38px;width:40px;height:2px;background:#8ec3f0"></div>
<div class="a" style="left:789px;top:38px;width:40px;height:2px;background:#8ec3f0"></div>
<div class="a" style="left:887px;top:38px;width:31px;height:2px;background:#8ec3f0"></div>
<div class="a" style="left:936px;top:38px;width:40px;height:2px;background:#8ec3f0"></div>
<div class="a" style="left:985px;top:38px;width:40px;height:2px;background:#8ec3f0"></div>
<div class="a" style="left:919px;top:38px;width:8px;height:2px;background:#7d8ea3"></div>
<svg class="a" style="left:1612px;top:11px" width="19" height="17" viewBox="0 0 19 17"><ellipse cx="9.5" cy="9.5" rx="9" ry="6" fill="#f0a81a"/><ellipse cx="9.5" cy="7" rx="6" ry="6" fill="#fbc52a"/><path d="M9.5 0 L10.8 3.5 L8.2 3.5 Z" fill="#f59a1e"/><circle cx="7.2" cy="7" r="1.1" fill="#2a3fa0"/><circle cx="11.8" cy="7" r="1.1" fill="#2a3fa0"/><path d="M4.5 12 H8.5 L8 16.5 H5 Z M10.5 12 H14.5 L14 16.5 H11 Z" fill="#3f6db2"/></svg>
<svg class="a" style="left:1639px;top:12px" width="14" height="17" viewBox="0 0 14 17"><rect x="3.5" y="0.5" width="6" height="4" fill="none" stroke="#fff" stroke-width="1"/><rect x="2.5" y="4.5" width="8" height="11" rx="1" fill="none" stroke="#fff" stroke-width="1"/><path d="M8 13.5 L10 15.8 L13.5 11.5" fill="none" stroke="#fff" stroke-width="1.1"/></svg>
<svg class="a" style="left:1661px;top:11px" width="17" height="17" viewBox="0 0 17 17"><path d="M8 1.5 A6.5 6 0 1 0 12.5 12 L15.5 13.5 L14 10.5 A6.5 6 0 0 0 8 1.5 Z" fill="none" stroke="#3aa0f0" stroke-width="1.8"/><circle cx="12.5" cy="13.5" r="2.6" fill="#35b34a"/><path d="M11 10.5 L14 10.5 L12.5 8.5 Z" fill="#f0b030"/><circle cx="9.7" cy="14.5" r="1.2" fill="#e8483a"/></svg>
<svg class="a" style="left:1685px;top:11px" width="17" height="17" viewBox="0 0 17 17"><path d="M7.5 0.6 L14 2.6 C14 9 12 13 7.5 15.5 C3 13 1 9 1 2.6 Z" fill="#fff" stroke="#1a1a1a" stroke-width="1.1"/><path d="M7.5 0.8 L7.5 15.3 M1.2 7.2 H13.8" stroke="#1a1a1a" stroke-width="1.1"/><circle cx="12" cy="12" r="4.3" fill="#e8262a"/><path d="M10.2 10.2 L13.8 13.8 M13.8 10.2 L10.2 13.8" stroke="#fff" stroke-width="1.4"/></svg>
<svg class="a" style="left:1709px;top:11px" width="16" height="17" viewBox="0 0 16 17"><path d="M8 0.5 L15 2.5 C15 9.5 12.5 13.5 8 16 C3.5 13.5 1 9.5 1 2.5 Z" fill="#2a6be0" stroke="#fff" stroke-width="1.1"/><path d="M4 6.5 L8 10.5 L12 6.5" fill="none" stroke="#fff" stroke-width="1.6"/></svg>
<svg class="a" style="left:1732px;top:12px" width="18" height="16" viewBox="0 0 18 16"><rect x="4.5" y="1.5" width="12" height="8.5" fill="none" stroke="#fff" stroke-width="1"/><path d="M10.5 10 V13 M6.5 13.5 H14.5" stroke="#fff" stroke-width="1"/><rect x="0.5" y="2.5" width="3.5" height="6" fill="#004275" stroke="#fff" stroke-width="1"/><path d="M1.5 4.5 H3" stroke="#fff" stroke-width=".8"/></svg>
<svg class="a" style="left:1756px;top:12px" width="17" height="16" viewBox="0 0 17 16"><path d="M1 5.5 H4 L8 1.5 V14.5 L4 10.5 H1 Z" fill="none" stroke="#fff" stroke-width="1"/><path d="M10.5 5.5 L15.5 10.5 M15.5 5.5 L10.5 10.5" stroke="#fff" stroke-width="1.1"/></svg>
<div class="a" style="left:1781px;top:10px;font-size:14px;line-height:20px;color:#fff;font-family:'Liberation Sans','Noto Sans CJK SC',sans-serif">中</div>
<div class="a" style="left:1809px;top:12px;width:16px;height:16px;border-radius:3px;background:#2f9cf4"></div>
<svg class="a" style="left:1809px;top:12px" width="16" height="16" viewBox="0 0 16 16"><circle cx="7.5" cy="7.5" r="4.2" fill="none" stroke="#fff" stroke-width="1.6"/><path d="M9.5 10 L12 12.5" stroke="#fff" stroke-width="1.6"/><circle cx="13" cy="13" r="1.4" fill="#7be04a"/></svg>
<div class="a" style="left:1840px;top:3px;width:70px;text-align:center;font-size:12px;line-height:16px;color:#fff;white-space:nowrap">11:43</div>
<div class="a" style="left:1835px;top:22px;width:80px;text-align:center;font-size:12px;line-height:16px;color:#fff;white-space:nowrap;letter-spacing:.4px">2024-03-06</div>
<div class="a" style="left:1915px;top:0;width:1px;height:40px;background:#5a7fa3"></div>
</div>
</body>
</html>
